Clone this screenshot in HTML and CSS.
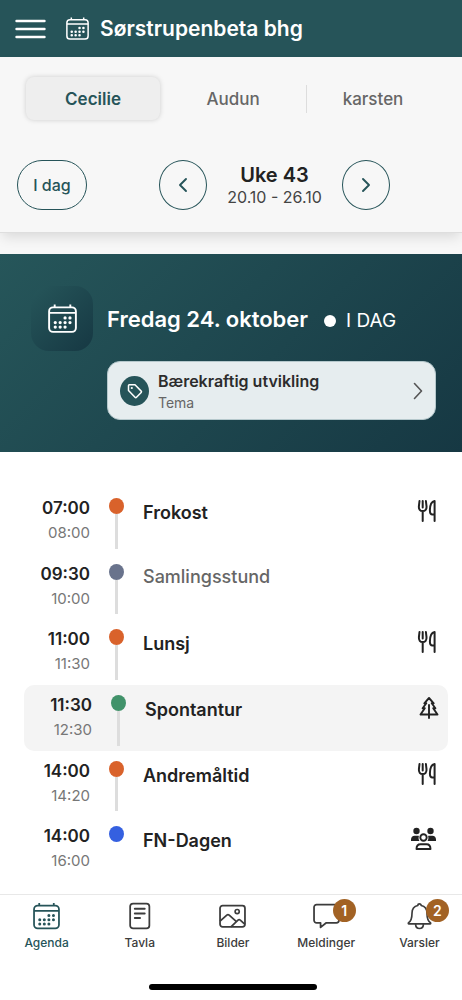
FILE: index.html
```html
<!DOCTYPE html>
<html lang="nb">
<head>
<meta charset="utf-8">
<meta name="viewport" content="width=device-width, initial-scale=1">
<title>Sørstrupenbeta bhg</title>
<link rel="stylesheet" href="styles.css">
</head>
<body>
<svg class="sprite" aria-hidden="true">
  <symbol id="calendar" viewBox="0 0 26 26">
    <rect x="1" y="3" width="24" height="22" rx="3.500" fill="none" stroke="currentColor" stroke-width="1.700"/>
    <path d="M1 8h24M6 .5v2.500M20 .5v2.500" fill="none" stroke="currentColor" stroke-width="1.700"/>
    <path d="M15.300 12.500h.01M19.700 12.500h.01M6.500 16.600h.01M10.900 16.600h.01M15.300 16.600h.01M19.700 16.600h.01M6.500 20.700h.01M10.900 20.700h.01M15.300 20.700h.01" fill="none" stroke="currentColor" stroke-width="2.900" stroke-linecap="round"/>
  </symbol>
  <symbol id="cutlery" viewBox="0 0 20 24">
    <path d="M2.500 2 1.900 7.200C1.600 10.400 3.200 12 5.700 12s4.100-1.600 3.800-4.800L8.900 2M5.700 2v6.500M5.700 12v10" fill="none" stroke="currentColor" stroke-width="2" stroke-linecap="round" stroke-linejoin="round"/>
    <path d="M17.600 22V2c-3.300.6-4.700 4.600-4.700 9.500 0 2.700.7 4 2.500 4h2.200" fill="none" stroke="currentColor" stroke-width="2" stroke-linecap="round" stroke-linejoin="round"/>
  </symbol>
</svg>

<header class="topbar">
  <button class="menu" type="button" aria-label="Meny">
    <svg class="menu-icon" viewBox="0 0 30 20"><path d="M1 2h28M1 10h28M1 18h28" fill="none" stroke="currentColor" stroke-width="2.400" stroke-linecap="round"/></svg>
  </button>
  <svg class="top-icon" aria-hidden="true"><use href="#calendar"/></svg>
  <h1 class="top-title">Sørstrupenbeta bhg</h1>
</header>

<section class="controls">
  <div class="tabs">
    <button class="tab tab-active" type="button">Cecilie</button>
    <button class="tab" type="button">Audun</button>
    <button class="tab tab-divided" type="button">karsten</button>
  </div>
  <div class="weekbar">
    <button class="pill" type="button">I dag</button>
    <div class="week">
      <button class="round" type="button" aria-label="Forrige uke"><svg class="arrow" viewBox="0 0 10 16"><path d="M8 2 2 8l6 6" fill="none" stroke="currentColor" stroke-width="1.900" stroke-linecap="round" stroke-linejoin="round"/></svg></button>
      <div class="week-text">
        <div class="week-name">Uke 43</div>
        <div class="week-dates">20.10 - 26.10</div>
      </div>
      <button class="round" type="button" aria-label="Neste uke"><svg class="arrow" viewBox="0 0 10 16"><path d="m2 2 6 6-6 6" fill="none" stroke="currentColor" stroke-width="1.900" stroke-linecap="round" stroke-linejoin="round"/></svg></button>
    </div>
  </div>
</section>

<section class="hero">
  <div class="hero-badge"><svg class="hero-icon" aria-hidden="true"><use href="#calendar"/></svg></div>
  <div class="hero-head">
    <h2 class="hero-date">Fredag 24. oktober</h2>
    <span class="hero-dot"></span>
    <span class="hero-today">I DAG</span>
  </div>
  <button class="theme" type="button">
    <span class="theme-mark"><svg class="theme-icon" viewBox="0 0 16 16"><path d="M1.500 2.500v5L8 14.300a1 1 0 0 0 1.500 0l4.700-4.800a1 1 0 0 0 0-1.400L8 1.700H2.300a.8.800 0 0 0-.8.800z" fill="none" stroke="currentColor" stroke-width="1.500" stroke-linejoin="round"/><circle cx="4.800" cy="5" r="1.100" fill="currentColor"/></svg></span>
    <span class="theme-text"><span class="theme-name">Bærekraftig utvikling</span><span class="theme-kind">Tema</span></span>
    <svg class="theme-arrow" viewBox="0 0 10 18"><path d="m1.500 1.500 7 7.500-7 7.500" fill="none" stroke="currentColor" stroke-width="1.600" stroke-linecap="round" stroke-linejoin="round"/></svg>
  </button>
</section>

<main class="agenda">
  <article class="event">
    <div class="times"><time class="start">07:00</time><time class="end">08:00</time></div>
    <div class="track"><span class="dot dot-orange"></span><span class="line"></span></div>
    <div class="body"><h3 class="title title-tall">Frokost</h3><svg class="kind" aria-hidden="true"><use href="#cutlery"/></svg></div>
  </article>
  <article class="event">
    <div class="times"><time class="start">09:30</time><time class="end">10:00</time></div>
    <div class="track"><span class="dot dot-gray"></span><span class="line"></span></div>
    <div class="body"><h3 class="title title-muted">Samlingsstund</h3></div>
  </article>
  <article class="event">
    <div class="times"><time class="start">11:00</time><time class="end">11:30</time></div>
    <div class="track"><span class="dot dot-orange"></span><span class="line"></span></div>
    <div class="body"><h3 class="title title-tall">Lunsj</h3><svg class="kind" aria-hidden="true"><use href="#cutlery"/></svg></div>
  </article>
  <article class="event event-current">
    <div class="times"><time class="start">11:30</time><time class="end">12:30</time></div>
    <div class="track"><span class="dot dot-green"></span><span class="line"></span></div>
    <div class="body"><h3 class="title title-tall">Spontantur</h3>
      <svg class="kind" viewBox="0 0 20 24" aria-hidden="true"><path d="M10 2 5.300 7.300h2L3.600 12.200h2.200L1.500 18.500h17l-4.300-6.300h2.200l-3.700-4.900h2zM10 9v13" fill="none" stroke="currentColor" stroke-width="1.900" stroke-linecap="round" stroke-linejoin="round"/></svg>
    </div>
  </article>
  <article class="event">
    <div class="times"><time class="start">14:00</time><time class="end">14:20</time></div>
    <div class="track"><span class="dot dot-orange"></span><span class="line"></span></div>
    <div class="body"><h3 class="title title-tall">Andremåltid</h3><svg class="kind" aria-hidden="true"><use href="#cutlery"/></svg></div>
  </article>
  <article class="event">
    <div class="times"><time class="start">14:00</time><time class="end">16:00</time></div>
    <div class="track"><span class="dot dot-blue"></span></div>
    <div class="body"><h3 class="title title-tall">FN-Dagen</h3>
      <svg class="kind kind-wide" viewBox="0 0 26 24" aria-hidden="true"><circle cx="6" cy="4" r="3.200" fill="currentColor"/><circle cx="20" cy="4" r="3.200" fill="currentColor"/><path d="M.5 14v-1.500C.5 10.300 2 8.800 4 8.800h3.500c.4 0 .6.100.9.200-.6 1.900-.3 3.800.6 5zM25.500 14v-1.500c0-2.200-1.500-3.700-3.500-3.700h-3.500c-.4 0-.6.100-.9.200.6 1.900.3 3.800-.6 5z" fill="currentColor"/><circle cx="13" cy="10.500" r="3.200" fill="none" stroke="currentColor" stroke-width="1.900"/><path d="M6 22c0-3 1.600-4.800 4-4.800h6c2.400 0 4 1.800 4 4.800z" fill="none" stroke="currentColor" stroke-width="1.900" stroke-linejoin="round"/></svg>
    </div>
  </article>
</main>

<nav class="bottom">
  <div class="bottom-inner">
    <div class="links">
      <a class="link link-active" href="#agenda"><span class="link-figure"><svg class="link-icon" aria-hidden="true"><use href="#calendar"/></svg></span>Agenda</a>
      <a class="link" href="#tavla"><span class="link-figure"><svg class="link-icon" viewBox="0 0 26 26"><rect x="4" y="1" width="18.500" height="24" rx="2.800" fill="none" stroke="currentColor" stroke-width="1.700"/><path d="M8.500 6h9.500M8.500 10.500h9.500M8.500 15h5" fill="none" stroke="currentColor" stroke-width="1.900" stroke-linecap="round"/></svg></span>Tavla</a>
      <a class="link" href="#bilder"><span class="link-figure"><svg class="link-icon" viewBox="0 0 26 26"><rect x="1" y="3" width="24" height="20.500" rx="2.500" fill="none" stroke="currentColor" stroke-width="1.700"/><circle cx="17.500" cy="8.700" r="2" fill="none" stroke="currentColor" stroke-width="1.600"/><path d="m1 18 6.500-5.800a1.700 1.700 0 0 1 2.300 0l7 6.300M11.500 23.500l6.800-6.500a1.600 1.600 0 0 1 2.200 0l4.500 4" fill="none" stroke="currentColor" stroke-width="1.700"/></svg></span>Bilder</a>
      <a class="link" href="#meldinger"><span class="link-figure"><svg class="link-icon" viewBox="0 0 26 26"><path d="M3.500 2h19A2.500 2.500 0 0 1 25 4.500v12.700a2.500 2.500 0 0 1-2.500 2.500h-10L7.300 24v-4.300H3.500A2.500 2.500 0 0 1 1 17.200V4.500A2.500 2.500 0 0 1 3.500 2z" fill="none" stroke="currentColor" stroke-width="1.700" stroke-linejoin="round"/></svg><span class="count">1</span></span>Meldinger</a>
      <a class="link" href="#varsler"><span class="link-figure"><svg class="link-icon" viewBox="0 0 26 26"><path d="M13 1.300c-.9 0-1.600.7-1.600 1.600C8 3.700 5.800 6.300 5.800 10c0 5-1.300 8-3.300 9.400-.5.400-.3 1.200.3 1.200h20.400c.6 0 .8-.8.3-1.200-2-1.400-3.300-4.400-3.300-9.400 0-3.700-2.200-6.300-5.600-7.100 0-.9-.7-1.600-1.600-1.600zM9.200 21c.2 2.400 1.700 4 3.800 4s3.600-1.600 3.800-4" fill="none" stroke="currentColor" stroke-width="1.600" stroke-linejoin="round"/></svg><span class="count">2</span></span>Varsler</a>
    </div>
    <div class="home"></div>
  </div>
</nav>
</body>
</html>
```

FILE: styles.css
```css
* { box-sizing: border-box; }

body {
  margin: 0;
  min-height: 100vh;
  display: flex;
  flex-direction: column;
  background: #fff;
  color: #222;
  font-family: Inter, "Liberation Sans", sans-serif;
}

button {
  margin: 0;
  padding: 0;
  border: 0;
  background: none;
  color: inherit;
  font: inherit;
  cursor: pointer;
}

h1, h2, h3 { margin: 0; font-weight: 600; }
svg { display: block; flex: none; }
.sprite { position: absolute; width: 0; height: 0; }

.topbar {
  display: flex;
  align-items: center;
  height: 57px;
  padding: 0 15px;
  background: #265459;
  color: #fff;
}
.menu-icon { width: 31px; height: 20px; }
.top-icon { width: 23px; height: 23px; margin-left: 20px; }
.top-title { margin-left: 11px; font-size: 21px; line-height: 28px; }

.controls {
  position: relative;
  padding: 20px 0 22px;
  background: #f7f7f7;
  border-bottom: 1px solid #dedede;
  box-shadow: 0 6px 12px -2px #0000001f;
}
.tabs {
  display: grid;
  grid-template-columns: repeat(3, 1fr);
  padding: 0 19px 0 23px;
}
.tab {
  height: 43px;
  margin: 0 3px;
  border-radius: 8px;
  color: #666;
  font-size: 17px;
  font-weight: 500;
}
.tab-active {
  background: #eee;
  color: #265459;
  font-weight: 600;
  box-shadow: 0 0 5px #0000002b;
}
.tab-divided {
  background: linear-gradient(#ddd, #ddd) left center / 1px 28px no-repeat;
  border-radius: 0;
}
.weekbar { display: flex; align-items: center; padding: 40px 0 0 17px; }
.pill, .round {
  border: 1px solid #265459;
  height: 50px;
  border-radius: 25px;
  color: #265459;
}
.pill { width: 70px; font-size: 16px; font-weight: 500; }
.week { flex: 1; display: flex; justify-content: center; align-items: center; gap: 20px; }
.round { display: grid; place-items: center; width: 48px; border-radius: 50%; }
.arrow { width: 10px; height: 16px; }
.week-text { text-align: center; }
.week-name { font-size: 20px; line-height: 24px; font-weight: 600; }
.week-dates { font-size: 16px; line-height: 20px; color: #444; }

.hero {
  display: grid;
  grid-template-columns: 62px 1fr;
  column-gap: 14px;
  row-gap: 10px;
  margin-top: 21px;
  padding: 32px 26px 32px 31px;
  background: linear-gradient(135deg, #26565a, #163843);
  box-shadow: 0 -21px 0 #f7f7f7;
}
.hero-badge {
  display: grid;
  place-items: center;
  height: 65px;
  border-radius: 18px;
  background: linear-gradient(135deg, #26565a, #163843);
}
.hero-icon { width: 29px; height: 29px; color: #fff; }
.hero-head { display: flex; align-items: center; color: #fff; }
.hero-date { font-size: 22px; line-height: 28px; }
.hero-dot { width: 12px; height: 12px; margin: 4px 10px 0 16px; border-radius: 50%; background: #fff; }
.hero-today { margin-top: 4px; font-size: 19px; line-height: 24px; }
.theme {
  grid-column: 2;
  display: flex;
  align-items: center;
  height: 59px;
  padding: 0 12px;
  border: 1px solid #b5c8cc;
  border-radius: 13px;
  background: #e6edef;
  text-align: left;
}
.theme-mark { display: grid; place-items: center; width: 29px; height: 30px; border-radius: 50%; background: #265459; color: #fff; }
.theme-icon { width: 16px; height: 16px; }
.theme-text { flex: 1; display: grid; margin-left: 9px; }
.theme-name { font-size: 16px; line-height: 24px; font-weight: 600; color: #2c2c2c; }
.theme-kind { font-size: 14px; line-height: 20px; color: #666; }
.theme-arrow { width: 10px; height: 18px; color: #555; }

.agenda {
  flex: 1;
  display: grid;
  grid-auto-rows: 1fr;
  padding: 36px 16px 12px 22px;
}
.event {
  display: grid;
  grid-template-columns: 68px 15px 1fr;
  column-gap: 19px;
  min-height: 64px;
  padding-right: 9px;
  border-radius: 10px;
}
.event-current { margin: 0 -2px 0 2px; background: #f4f4f4; }
.times { display: grid; align-content: start; padding-top: 8px; text-align: right; }
.start { font-size: 17px; line-height: 25px; font-weight: 600; }
.end { font-size: 15px; line-height: 24px; color: #777; }
.track { display: flex; flex-direction: column; align-items: center; padding: 10px 0 5px; }
.dot { width: 15px; height: 16px; border-radius: 50%; }
.line { flex: 1; width: 3px; background: #ddd; }
.dot-orange { background: #d9622b; }
.dot-gray { background: #69738c; }
.dot-green { background: #41926a; }
.dot-blue { background: #3560e0; }
.body { display: flex; justify-content: space-between; align-items: flex-start; padding-top: 9px; }
.title { font-size: 18px; line-height: 28px; }
.title-tall { line-height: 32px; }
.title-muted { color: #666; font-weight: 500; }
.kind { width: 20px; height: 24px; margin-top: 2px; }
.kind-wide { width: 27px; }

.bottom { border-top: 1px solid #e8e8e8; overflow-x: clip; padding: 7px 0 10px; }
.bottom-inner { margin-right: -4px; }
.links { display: grid; grid-template-columns: repeat(5, 1fr); }
.link {
  display: flex;
  flex-direction: column;
  align-items: center;
  gap: 4px;
  color: #3c3c3c;
  font-size: 12px;
  line-height: 18px;
  font-weight: 500;
  text-decoration: none;
}
.link-active { color: #265459; }
.link-figure { position: relative; }
.link-icon { width: 27px; height: 28px; }
.count {
  position: absolute;
  top: -3px;
  left: 20px;
  display: grid;
  place-items: center;
  width: 23px;
  height: 23px;
  border-radius: 50%;
  background: #a26224;
  color: #fff;
  font-size: 14px;
  font-weight: 600;
}
.home { width: 36%; height: 6px; margin: 32px auto 0; border-radius: 3px; background: #000; }
```
